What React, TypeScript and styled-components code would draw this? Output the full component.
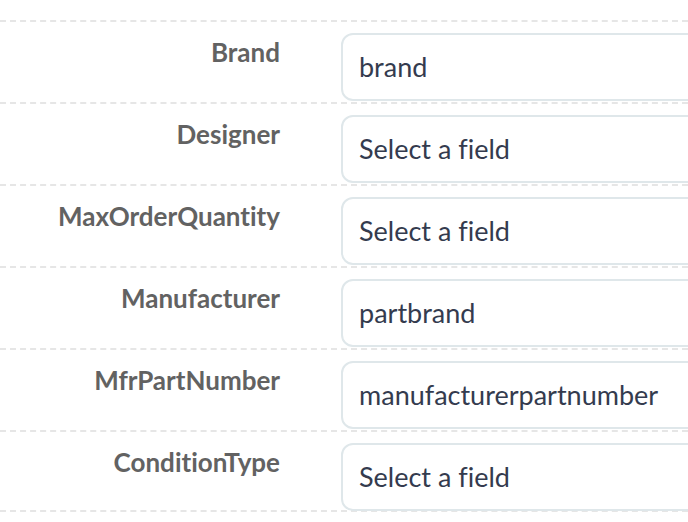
import styled, { createGlobalStyle } from 'styled-components'

const GlobalStyle = createGlobalStyle`
  html, body {
    margin: 0;
    padding: 0;
    background: #fff;
    overflow: hidden;
  }
`

const fields = [
  { label: 'Brand', value: 'brand' },
  { label: 'Designer', value: 'Select a field' },
  { label: 'MaxOrderQuantity', value: 'Select a field' },
  { label: 'Manufacturer', value: 'partbrand' },
  { label: 'MfrPartNumber', value: 'manufacturerpartnumber' },
  { label: 'ConditionType', value: 'Select a field' },
]

export default function App() {
  return (
    <>
      <GlobalStyle />
      <Form>
        {fields.map((f) => (
          <Row key={f.label}>
            <Label>{f.label}</Label>
            <Field>{f.value}</Field>
          </Row>
        ))}
      </Form>
    </>
  )
}

const Form = styled.div`
  padding-top: 20px;
  width: 688px;
  overflow: hidden;
  font-family: 'Lato', 'Liberation Sans', sans-serif;
  font-variant-ligatures: none;
`

const Row = styled.div`
  display: grid;
  grid-template-columns: 280px 420px;
  column-gap: 61px;
  border-top: 2px dashed #e6e6e6;
  padding: 11px 0 1px;
  box-sizing: border-box;
  height: 82px;

  &:last-child {
    border-bottom: 2px dashed #e6e6e6;
  }
`

const Label = styled.div`
  text-align: right;
  font-size: 26px;
  font-weight: 700;
  color: #626262;
  line-height: 30px;
  padding-top: 4px;
`

const Field = styled.div`
  height: 68px;
  box-sizing: border-box;
  border: 2px solid #dfe7ea;
  border-radius: 12px;
  background: #fff;
  padding: 0 16px 2px;
  display: flex;
  align-items: center;
  font-size: 27px;
  color: #343b4e;
  white-space: nowrap;
`
